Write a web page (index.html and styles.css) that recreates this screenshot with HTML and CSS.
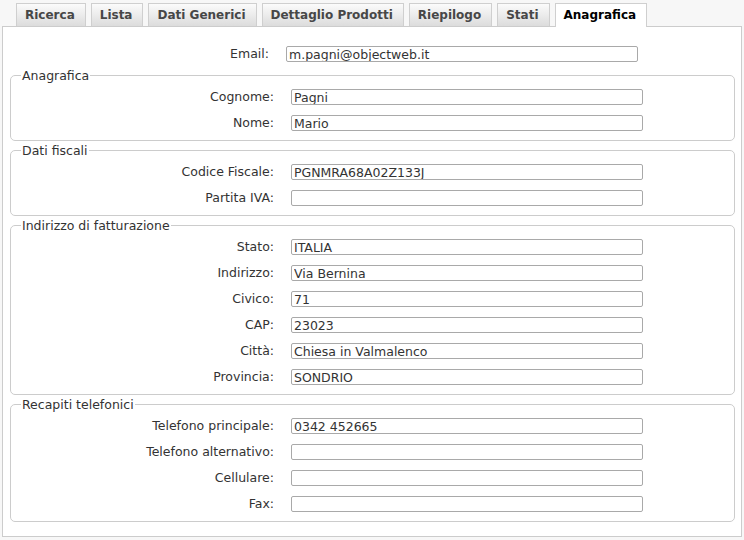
FILE: index.html
```html
<!DOCTYPE html>
<html lang="it">
<head>
<meta charset="utf-8">
<title>Anagrafica</title>
<link rel="stylesheet" href="styles.css">
</head>
<body>
<div class="page">
  <ul class="tabs">
    <li class="tab">Ricerca</li>
    <li class="tab">Lista</li>
    <li class="tab">Dati Generici</li>
    <li class="tab">Dettaglio Prodotti</li>
    <li class="tab">Riepilogo</li>
    <li class="tab">Stati</li>
    <li class="tab tab-active">Anagrafica</li>
  </ul>
  <div class="panel">
    <div class="rows rows-top">
      <label class="lbl">Email:</label><input class="field" type="text" value="m.pagni@objectweb.it">
    </div>

    <fieldset class="group">
      <legend class="legend">Anagrafica</legend>
      <div class="rows">
        <label class="lbl">Cognome:</label><input class="field" type="text" value="Pagni">
        <label class="lbl">Nome:</label><input class="field" type="text" value="Mario">
      </div>
    </fieldset>

    <fieldset class="group">
      <legend class="legend">Dati fiscali</legend>
      <div class="rows">
        <label class="lbl">Codice Fiscale:</label><input class="field" type="text" value="PGNMRA68A02Z133J">
        <label class="lbl">Partita IVA:</label><input class="field" type="text" value="">
      </div>
    </fieldset>

    <fieldset class="group">
      <legend class="legend">Indirizzo di fatturazione</legend>
      <div class="rows">
        <label class="lbl">Stato:</label><input class="field" type="text" value="ITALIA">
        <label class="lbl">Indirizzo:</label><input class="field" type="text" value="Via Bernina">
        <label class="lbl">Civico:</label><input class="field" type="text" value="71">
        <label class="lbl">CAP:</label><input class="field" type="text" value="23023">
        <label class="lbl">Città:</label><input class="field" type="text" value="Chiesa in Valmalenco">
        <label class="lbl">Provincia:</label><input class="field" type="text" value="SONDRIO">
      </div>
    </fieldset>

    <fieldset class="group">
      <legend class="legend">Recapiti telefonici</legend>
      <div class="rows">
        <label class="lbl">Telefono principale:</label><input class="field" type="text" value="0342 452665">
        <label class="lbl">Telefono alternativo:</label><input class="field" type="text" value="">
        <label class="lbl">Cellulare:</label><input class="field" type="text" value="">
        <label class="lbl">Fax:</label><input class="field" type="text" value="">
      </div>
    </fieldset>
  </div>
</div>
</body>
</html>
```

FILE: styles.css
```css
html, body {
  margin: 0;
  padding: 0;
  background: #f7f7f7;
}

body {
  font-family: "DejaVu Sans", Verdana, sans-serif;
  font-size: 12.5px;
  color: #333;
}

.page {
  padding: 3px 2px 0 2px;
}

.tabs {
  list-style: none;
  margin: 0 0 0 14px;
  padding: 0;
  display: flex;
  align-items: flex-end;
  gap: 5px;
  position: relative;
  z-index: 1;
}

.tab {
  box-sizing: border-box;
  height: 23px;
  line-height: 22px;
  padding: 0 10px 0 8px;
  border: 1px solid #cfcfcf;
  border-bottom: none;
  background: linear-gradient(#fbfbfb, #dcdcdc);
  font-size: 12px;
  font-weight: bold;
  color: #474747;
  white-space: nowrap;
}

.tab-active {
  height: 24px;
  margin-bottom: -1px;
  background: #fff;
  color: #000;
  line-height: 23px;
}

.panel {
  background: #fff;
  border: 1px solid #cccccc;
  padding: 19px 6px 14px 7px;
}

.rows {
  display: grid;
  grid-template-columns: 259px 352px;
  grid-auto-rows: 16px;
  column-gap: 17px;
  row-gap: 10px;
  align-items: center;
}

.lbl {
  text-align: right;
  white-space: nowrap;
  line-height: 16px;
  color: #333;
}

.field {
  box-sizing: border-box;
  height: 16px;
  width: 352px;
  margin: 0;
  padding: 0 2px;
  border: 1px solid #a9a9a9;
  border-radius: 2px;
  background: #fff;
  font-family: "DejaVu Sans", Verdana, sans-serif;
  font-size: 12.5px;
  color: #333;
  line-height: 14px;
  outline: none;
}

.group {
  margin: 6px 0 0 0;
  padding: 6px 0 9px 4px;
  border: 1px solid #cccccc;
  border-radius: 5px;
}

.group + .group {
  margin-top: 2px;
}

.legend {
  margin-left: 6px;
  padding: 0 1px;
  line-height: 15px;
  font-size: 12.5px;
  color: #333;
}
```
